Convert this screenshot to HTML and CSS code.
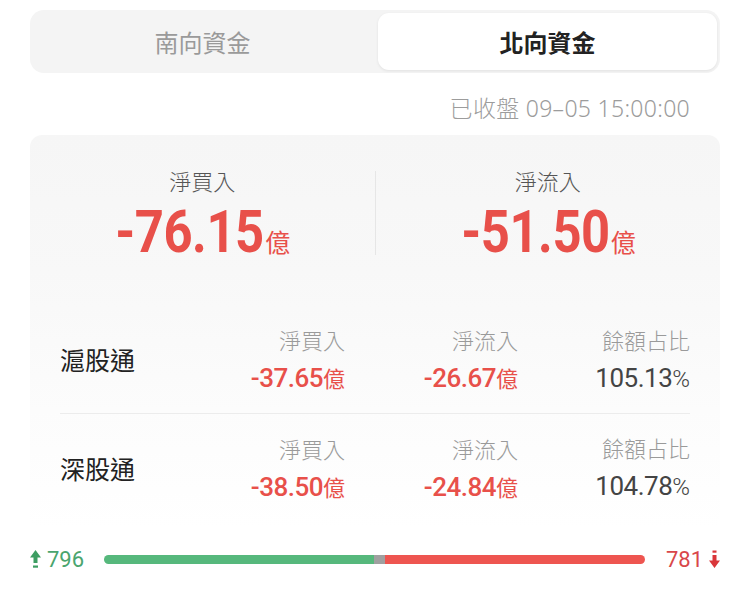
FILE: index.html
```html
<!DOCTYPE html>
<html lang="zh-Hant">
<head>
<meta charset="utf-8">
<link rel="stylesheet" href="styles.css">
</head>
<body>
<div class="page">
  <div class="seg">
    <div class="tab">南向資金</div>
    <div class="tab active">北向資金</div>
  </div>
  <div class="stamp">已收盤 09–05 15:00:00</div>
  <div class="card">
    <div class="summary">
      <div class="sum-col">
        <div class="sum-label">淨買入</div>
        <div class="sum-val"><span class="num">-76.15</span><span class="unit">億</span></div>
      </div>
      <div class="sum-div"></div>
      <div class="sum-col">
        <div class="sum-label">淨流入</div>
        <div class="sum-val"><span class="num">-51.50</span><span class="unit">億</span></div>
      </div>
    </div>
    <div class="rows">
      <div class="row">
        <div class="name">滬股通</div>
        <div class="cell"><div class="lbl">淨買入</div><div class="val red"><span class="n">-37.65</span>億</div></div>
        <div class="cell"><div class="lbl">淨流入</div><div class="val red"><span class="n">-26.67</span>億</div></div>
        <div class="cell"><div class="lbl">餘額占比</div><div class="val gray"><span class="n">105.13</span><span class="pct">%</span></div></div>
      </div>
      <div class="row">
        <div class="name">深股通</div>
        <div class="cell"><div class="lbl">淨買入</div><div class="val red"><span class="n">-38.50</span>億</div></div>
        <div class="cell"><div class="lbl">淨流入</div><div class="val red"><span class="n">-24.84</span>億</div></div>
        <div class="cell"><div class="lbl">餘額占比</div><div class="val gray"><span class="n">104.78</span><span class="pct">%</span></div></div>
      </div>
    </div>
  </div>
  <div class="breadth">
    <div class="cnt up">
      <svg class="arr" width="11" height="18" viewBox="0 0 11 18"><path d="M5.5 0 L11 7.5 L7.5 7.5 L7.5 13 L3.5 13 L3.5 7.5 L0 7.5 Z" fill="#3d9d62"/><rect x="3" y="15.5" width="5" height="2.2" fill="#3d9d62"/></svg>
      <span>796</span>
    </div>
    <div class="bar">
      <div class="seg-g" style="width:49.9%"></div>
      <div class="seg-n" style="width:2%"></div>
      <div class="seg-r" style="width:48.1%"></div>
    </div>
    <div class="cnt down">
      <span>781</span>
      <svg class="arr" width="11" height="18" viewBox="0 0 11 18"><rect x="3.5" y="0.5" width="4" height="2.2" fill="#d9363a"/><path d="M5.5 18 L11 10.5 L7.5 10.5 L7.5 5 L3.5 5 L3.5 10.5 L0 10.5 Z" fill="#d9363a"/></svg>
    </div>
  </div>
</div>
</body>
</html>
```
FILE: styles.css
```css
* { box-sizing: border-box; }
html, body { margin: 0; padding: 0; background: #fff; }
body {
  font-family: "Noto Sans CJK TC", "Noto Sans", sans-serif;
  color: #222;
}
.page { width: 750px; padding: 10px 30px 0; }

.seg {
  height: 63px;
  background: #f4f4f4;
  border-radius: 14px;
  padding: 3px;
  display: grid;
  grid-template-columns: 1fr 1fr;
  gap: 6px;
}
.tab {
  display: flex;
  align-items: center;
  justify-content: center;
  font-size: 24px;
  color: #9a9a9a;
  border-radius: 11px;
}
.tab.active {
  background: #fff;
  color: #222;
  font-weight: 700;
  box-shadow: 0 1px 3px rgba(0,0,0,0.08);
}

.stamp {
  margin-top: 21px;
  text-align: right;
  padding-right: 30px;
  font-family: "Noto Sans", "Noto Sans CJK TC", sans-serif;
  font-size: 23px;
  font-weight: 300;
  letter-spacing: 0.3px;
  line-height: 28px;
  color: #9c9c9c;
}

.card {
  margin-top: 13px;
  border-radius: 12px;
  background: linear-gradient(to bottom, #f6f6f6 0%, #f8f8f8 35%, #fcfcfc 70%, #ffffff 100%);
  padding-bottom: 8px;
}

.summary {
  display: grid;
  grid-template-columns: 1fr 1px 1fr;
  padding-top: 30px;
  height: 170px;
}
.sum-col { display: flex; flex-direction: column; align-items: center; }
.sum-label { font-size: 22px; line-height: 30px; color: #555; font-weight: 300; }
.sum-div { background: #e6e6e6; height: 84px; margin-top: 6px; }
.sum-val {
  margin-top: 7px;
  color: #e8504a;
  display: flex;
  align-items: baseline;
}
.sum-val .num {
  font-family: "Roboto", sans-serif;
  font-weight: 700;
  font-size: 59px;
  line-height: 60px;
  letter-spacing: -0.5px;
  display: inline-block;
  transform: scaleX(0.86);
  transform-origin: right center;
  margin-left: -23px;
}
.sum-val .unit { font-size: 25px; margin-left: 1px; }

.rows { padding: 0 30px; }
.row {
  display: grid;
  grid-template-columns: 112px 173px 173px 172px;
  align-items: center;
  height: 108px;
}
.row + .row { border-top: 1px solid #ececec; }
.name { font-size: 25px; color: #222; }
.cell { text-align: right; }
.lbl { font-size: 22px; line-height: 28px; color: #9a9a9a; font-weight: 300; }
.val { font-size: 22px; line-height: 30px; margin-top: 9px; }
.val .n {
  font-family: "Roboto", sans-serif;
  font-size: 26px;
  font-weight: 500;
  letter-spacing: -0.5px;
}
.val.red { color: #e8504a; }
.val.gray { color: #444; }
.val.gray .n { font-weight: 400; }
.val .pct { font-family: "Roboto", sans-serif; font-size: 24px; font-weight: 300; }

.breadth {
  display: flex;
  align-items: center;
  height: 48px;
  margin-top: 6px;
}
.cnt {
  display: flex;
  align-items: center;
  font-family: "Roboto", sans-serif;
  font-size: 22px;
}
.cnt.up { color: #4aa56e; width: 74px; gap: 6px; }
.cnt.down { color: #d9474a; width: 75px; gap: 6px; justify-content: flex-end; }
.bar {
  flex: 1;
  display: flex;
  height: 9px;
  border-radius: 5px;
  overflow: hidden;
}
.seg-g { background: #56b87c; }
.seg-n { background: #a0a0a0; }
.seg-r { background: #ee5550; }
```
